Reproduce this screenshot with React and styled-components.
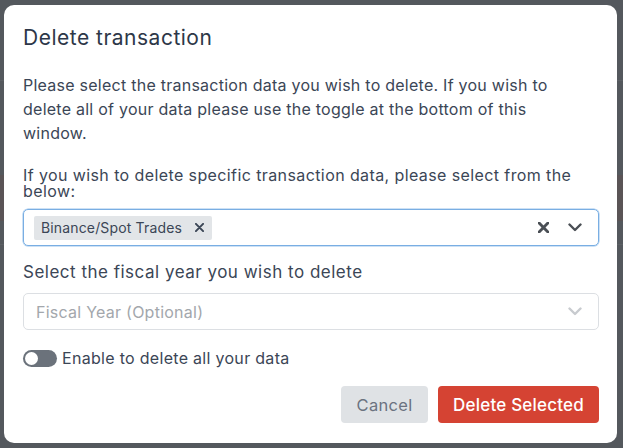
import React from "react";
import styled, { createGlobalStyle } from "styled-components";

const Global = createGlobalStyle`
  html, body { margin: 0; padding: 0; }
  body { font-family: Inter, "Noto Sans", sans-serif; background: #54585d; }
  * { box-sizing: border-box; }
`;

const Backdrop = styled.div`
  width: 623px;
  height: 448px;
  background: #54585d;
  padding: 5px 6px 5px 4px;
  display: flex;
  position: relative;
`;

const BackStrip = styled.div`
  position: absolute;
  left: 0;
  right: 0;
  top: ${(p) => p.$top}px;
  height: ${(p) => p.$h}px;
  background: ${(p) => p.$bg};
`;

const Modal = styled.div`
  position: relative;
  flex: 1;
  background: #fff;
  border-radius: 10px;
  padding: 21px 18px 0 19px;
  display: flex;
  flex-direction: column;
  color: #3b4656;
`;

const Title = styled.h2`
  margin: 0 0 23px;
  font-size: 21px;
  letter-spacing: 0.5px;
  font-weight: 400;
  line-height: 24px;
  color: #2d3748;
`;

const Para = styled.p`
  margin: 0 0 22px;
  max-width: 540px;
  font-size: 16px;
  letter-spacing: 0.25px;
  line-height: 24px;
`;

const Label = styled.div`
  font-size: ${(p) => p.$fs || 16}px;
  letter-spacing: ${(p) => p.$ls ?? 0.3}px;
  line-height: ${(p) => p.$lh || 20}px;
  margin-top: ${(p) => p.$mt || 0}px;
  margin-bottom: ${(p) => p.$mb || 0}px;
  color: #3b4656;
`;

const Select = styled.div`
  height: 37px;
  border: 1px solid ${(p) => (p.$focus ? "#79aee3" : "#dcdfe3")};
  border-radius: 5px;
  display: flex;
  align-items: center;
  padding: 0 8px 0 10px;
  box-shadow: ${(p) => (p.$focus ? "0 0 0 0.5px #9cc4ec" : "none")};
`;

const Values = styled.div`
  flex: 1;
  display: flex;
  align-items: center;
`;

const Chip = styled.div`
  display: flex;
  align-items: center;
  height: 24px;
  width: 178px;
  background: #e2e5e8;
  border-radius: 2px;
  padding: 0 0 0 7px;
  font-size: 14px;
  letter-spacing: 0.15px;
  color: #3b4656;
  gap: 13px;
`;

const Placeholder = styled.span`
  font-size: 16px;
  letter-spacing: 0.25px;
  color: #a3a7ac;
  padding-left: 2px;
`;

const Indicator = styled.div`
  width: 31px;
  display: flex;
  justify-content: center;
  align-items: center;
`;

const Row = styled.div`
  display: flex;
  align-items: center;
  gap: 5px;
  margin-top: 18px;
`;

const Toggle = styled.div`
  width: 34px;
  height: 17px;
  border-radius: 9px;
  background: #6b727b;
  position: relative;
  &::after {
    content: "";
    position: absolute;
    left: 2px;
    top: 2px;
    width: 13px;
    height: 13px;
    border-radius: 50%;
    background: #fff;
  }
`;

const Actions = styled.div`
  display: flex;
  justify-content: flex-end;
  gap: 10px;
  margin-top: 18px;
`;

const Button = styled.button`
  height: 37px;
  width: ${(p) => (p.$primary ? 161 : 87)}px;
  border: none;
  border-radius: 4px;
  font-family: inherit;
  font-size: ${(p) => (p.$primary ? 17 : 16.5)}px;
  letter-spacing: ${(p) => (p.$primary ? 0.2 : 0.3)}px;
  padding: 0;
  background: ${(p) => (p.$primary ? "#d54333" : "#dfe2e5")};
  color: ${(p) => (p.$primary ? "#fff" : "#6b7280")};
  font-weight: ${(p) => (p.$primary ? 500 : 400)};
`;

const XIcon = ({ size = 10, color = "#3b4656", w = 2 }) => (
  <svg width={size} height={size} viewBox="0 0 10 10">
    <path d="M1 1L9 9M9 1L1 9" stroke={color} strokeWidth={w} strokeLinecap="round" />
  </svg>
);

const Chevron = ({ color }) => (
  <svg width="14" height="9" viewBox="0 0 14 9">
    <path d="M1.5 1.5L7 7L12.5 1.5" stroke={color} strokeWidth="2.4" fill="none" strokeLinecap="round" strokeLinejoin="round" />
  </svg>
);

export default function App() {
  return (
    <>
      <Global />
      <Backdrop>
        <BackStrip $top={80} $h={1} $bg="#5c6065" />
        <BackStrip $top={175} $h={46} $bg="#5a5456" />
        <BackStrip $top={244} $h={1} $bg="#5c6065" />
        <Modal>
          <Title>Delete transaction</Title>
          <Para>
            Please select the transaction data you wish to delete. If you wish to
            delete all of your data please use the toggle at the bottom of this
            window.
          </Para>
          <Label $ls={0.4} $lh={16} $mb={10}>
            If you wish to delete specific transaction data, please select from the below:
          </Label>
          <Select $focus>
            <Values>
              <Chip>
                Binance/Spot Trades
                <XIcon size={9} w={2.2} />
              </Chip>
            </Values>
            <Indicator>
              <XIcon size={11} color="#4a4f55" w={2.6} />
            </Indicator>
            <Indicator>
              <Chevron color="#4a4f55" />
            </Indicator>
          </Select>
          <Label $fs={17} $ls={0.5} $lh={20} $mt={16} $mb={11}>
            Select the fiscal year you wish to delete
          </Label>
          <Select>
            <Values>
              <Placeholder>Fiscal Year (Optional)</Placeholder>
            </Values>
            <Indicator>
              <Chevron color="#c8cbcf" />
            </Indicator>
          </Select>
          <Row>
            <Toggle />
            <Label>Enable to delete all your data</Label>
          </Row>
          <Actions>
            <Button>Cancel</Button>
            <Button $primary>Delete Selected</Button>
          </Actions>
        </Modal>
      </Backdrop>
    </>
  );
}
